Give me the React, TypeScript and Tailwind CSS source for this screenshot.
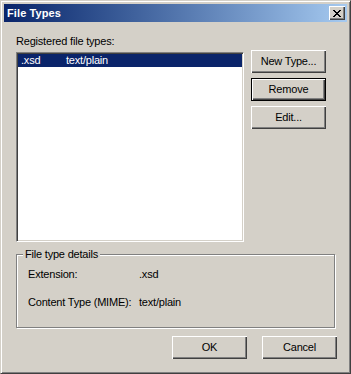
import React from "react";

// Classic 3D bevels
const raised =
  "shadow-[inset_1px_1px_0_#ffffff,inset_-1px_-1px_0_#404040,inset_-2px_-2px_0_#808080]";

const Button = ({
  label,
  isDefault = false,
}: {
  label: string;
  isDefault?: boolean;
}) => (
  <div
    className={
      "flex h-[23px] w-[75px] items-center justify-center bg-[#d4d0c8] text-[11px] leading-[13px] text-black " +
      (isDefault ? "border border-black " : "") +
      raised
    }
  >
    {label}
  </div>
);

const CloseGlyph = () => (
  <svg width="8" height="7" viewBox="0 0 8 7" shapeRendering="crispEdges">
    <path
      fill="#000"
      d="M0 0h2v1H0zM6 0h2v1H6zM1 1h2v1H1zM5 1h2v1H5zM2 2h4v1H2zM3 3h2v1H3zM2 4h4v1H2zM1 5h2v1H1zM5 5h2v1H5zM0 6h2v1H0zM6 6h2v1H6z"
    />
  </svg>
);

export default function App() {
  return (
    <div className="h-[374px] w-[351px] font-['Liberation_Sans',Arial,sans-serif] tracking-[-0.2px]">
      {/* Window frame */}
      <div className="flex h-full w-full flex-col border border-t-[#d4d0c8] border-l-[#d4d0c8] border-r-[#404040] border-b-[#404040] bg-[#d4d0c8] p-[3px] shadow-[inset_1px_1px_0_#ffffff,inset_-1px_-1px_0_#808080]">
        {/* Title bar */}
        <div className="flex h-[18px] items-center justify-between bg-gradient-to-r from-[#0a246a] to-[#a6caf0] pl-[3px] pr-[2px]">
          <span className="text-[11px] font-bold leading-[13px] tracking-[0.1px] text-white">
            File Types
          </span>
          <div
            className={
              "flex h-[14px] w-[16px] items-center justify-center bg-[#d4d0c8] " +
              raised
            }
          >
            <CloseGlyph />
          </div>
        </div>

        {/* Body */}
        <div className="flex flex-col pl-[12px] pr-[10px] text-[11px] leading-[13px] text-black">
          <div className="mt-[13px] flex">
            <div className="flex w-[228px] flex-col">
              <span className="h-[13px]">Registered file types:</span>
              <div className="mt-[4px] h-[190px] border border-t-[#808080] border-l-[#808080] border-r-white border-b-white bg-white p-[1px] shadow-[inset_1px_1px_0_#404040,inset_-1px_-1px_0_#d4d0c8]">
                <div className="flex h-[13px] items-center bg-[#0a246a] text-white">
                  <span className="w-[48px] pl-[3px]">.xsd</span>
                  <span>text/plain</span>
                </div>
              </div>
            </div>
            <div className="ml-[7px] flex flex-col gap-[5px] pt-[15px]">
              <Button label="New Type..." />
              <Button label="Remove" isDefault />
              <Button label="Edit..." />
            </div>
          </div>

          {/* Group box */}
          <div className="relative mt-[12px] h-[74px] w-[319px] border border-[#808080] pl-[11px] pt-[13px] shadow-[inset_1px_1px_0_#ffffff,1px_1px_0_#ffffff]">
            <span className="absolute left-[6px] top-[-7px] bg-[#d4d0c8] px-[2px]">
              File type details
            </span>
            <div className="flex h-[13px]">
              <span className="w-[111px]">Extension:</span>
              <span>.xsd</span>
            </div>
            <div className="mt-[15px] flex h-[13px]">
              <span className="w-[111px]">Content Type (MIME):</span>
              <span>text/plain</span>
            </div>
          </div>

          {/* Dialog buttons */}
          <div className="mt-[8px] flex justify-end gap-[15px]">
            <Button label="OK" />
            <Button label="Cancel" />
          </div>
        </div>
      </div>
    </div>
  );
}
